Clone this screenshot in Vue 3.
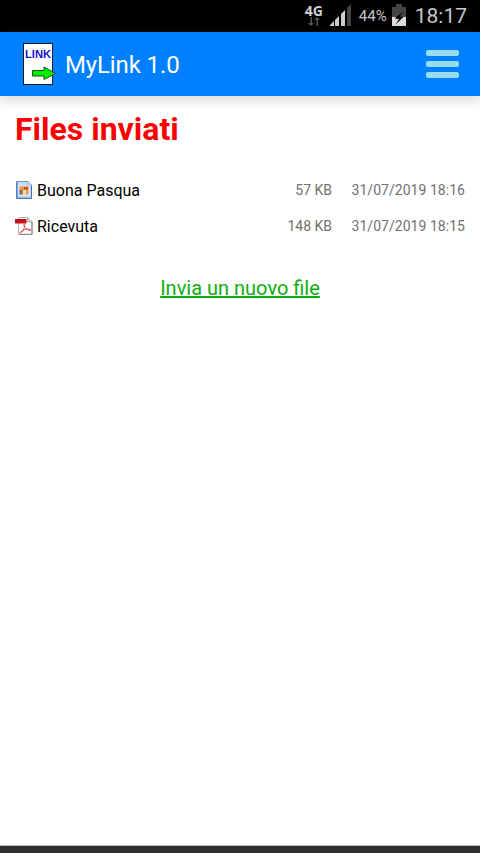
<script setup>
const files = [
  { name: 'Buona Pasqua', type: 'image', size: '57 KB', date: '31/07/2019 18:16' },
  { name: 'Ricevuta', type: 'pdf', size: '148 KB', date: '31/07/2019 18:15' },
]
</script>

<template>
  <div class="screen">
    <div class="status">
      <div class="network">
        <span class="net-label">4G</span>
        <svg width="12" height="10" viewBox="0 0 12 10" fill="#555">
          <path d="M2.500 0h1.500v6h2L3 9 0 6h2.500zM8.500 9V3H6L9 0l3 3h-2v6z" />
        </svg>
      </div>
      <svg class="signal" width="22" height="22" viewBox="0 0 22 22">
        <path d="M0 22v-1l4-4v5z" fill="#d0d0d0" />
        <path d="M5 22v-6l4-4v10zM11 22V10l4-4v16z" fill="#d0d0d0" />
        <path d="M17 22V4l4-4v22z" fill="#444" />
      </svg>
      <span class="percent">44%</span>
      <svg class="battery" width="14" height="22" viewBox="0 0 14 22">
        <path d="M4 0h6v3h4v19H0V3h4z" fill="#444" />
        <path d="M0 13h14v9H0z" fill="#ddd" />
        <path d="M12 7L2.500 14.500l4.500.5-3.500 5.500 8-7.500-4-.5z" fill="#000" />
      </svg>
      <span class="clock">18:17</span>
    </div>

    <header class="bar">
      <svg class="logo" width="34" height="42" viewBox="0 0 34 42">
        <rect x=".5" y=".5" width="29" height="41" fill="#fff" stroke="#123" />
        <text x="2" y="15" class="logo-text" textLength="26" lengthAdjust="spacingAndGlyphs">LINK</text>
        <path d="M9.500 27.500H21V24L32.500 30.500 21 36.500V33H9.500z" fill="#00f000" stroke="#145014" />
      </svg>
      <span class="app-name">MyLink 1.0</span>
      <div class="menu"><i></i><i></i><i></i></div>
    </header>

    <main class="content">
      <h1>Files inviati</h1>
      <div v-for="file in files" :key="file.name" class="row">
        <svg v-if="file.type === 'image'" class="icon" width="18" height="18" viewBox="0 0 18 18">
          <path d="M1.500.5h11l4 3.500v13.500h-15z" fill="#c4d9f5" stroke="#6a93ce" />
          <path d="M2 1v16" stroke="#3c71bf" />
          <path d="M1.500 17.200h15V5" fill="none" stroke="#3f70b7" />
          <path d="M12.500.5V4h4z" fill="#f5f9ff" stroke="#7b9dcc" stroke-width=".7" />
          <rect x="3.500" y="4.500" width="11" height="10" fill="#eef5fc" />
          <rect x="4.500" y="5.500" width="9" height="8" fill="#e69040" />
          <path d="M4.500 5.500h9v2h-9z" fill="#e8a04c" />
          <path d="M9 6h4v2.500H9z" fill="#c8521c" />
          <path d="M4.500 9h3v4.500h-3z" fill="#66798a" />
          <path d="M8 9h3v4.500H8z" fill="#f9dca8" />
        </svg>
        <svg v-else class="icon" width="18" height="18" viewBox="0 0 18 18">
          <path d="M3.500.5h9L17 5v12.500H3.500z" fill="#fff" stroke="#b5b5b5" />
          <path d="M4 17.300h13V5" fill="none" stroke="#808080" />
          <path d="M12.500.5V5H17z" fill="#ddd" stroke="#999" stroke-width=".7" />
          <path d="M0 2h11.500v4.500H0z" fill="#c60c16" />
          <path d="M9 7c-.8 2 2 6 6 6.500 1.500 0 1-1.500-1-1.500-3 0-6 1-8.500 3-1.500 1.500.5 1.500 2-.8C9.500 11 10.500 7.500 9 7z" fill="none" stroke="#e04b50" />
        </svg>
        <span class="name">{{ file.name }}</span>
        <span class="size">{{ file.size }}</span>
        <span class="date">{{ file.date }}</span>
      </div>
      <div class="send"><a>Invia un nuovo file</a></div>
    </main>
    <div class="bottom"></div>
  </div>
</template>

<style>
body {
  background: #fff;
}
</style>

<style scoped>
.screen {
  width: 480px;
  height: 853px;
  display: flex;
  flex-direction: column;
  overflow: hidden;
  background: #fff;
  font-family: Roboto, sans-serif;
}
.status {
  height: 32px;
  flex: none;
  box-sizing: border-box;
  display: flex;
  align-items: flex-start;
  justify-content: flex-end;
  padding: 4px 13px 0 0;
  background: #000;
  color: #c8c8c8;
}
.network {
  width: 20px;
  display: flex;
  flex-direction: column;
  align-items: center;
  margin-right: 6px;
}
.net-label {
  font: 700 14px/13px "Noto Sans", sans-serif;
  color: #d0d0d0;
}
.signal {
  margin-right: 7px;
}
.percent {
  font-size: 15px;
  line-height: 25px;
  margin-right: 5px;
}
.battery {
  margin-right: 9px;
}
.clock {
  font-size: 21px;
  line-height: 25px;
}
.bar {
  height: 64px;
  flex: none;
  box-sizing: border-box;
  display: flex;
  align-items: center;
  padding: 0 21px 0 23px;
  background: #007fff;
  color: #fff;
  box-shadow: 0 2px 14px rgba(60, 40, 30, 0.24);
}
.logo-text {
  font: 700 11px "Liberation Sans", sans-serif;
  fill: #1515d0;
}
.app-name {
  margin-left: 8px;
  padding-top: 2px;
  font-size: 24px;
  line-height: 30px;
  letter-spacing: -0.12px;
}
.menu {
  margin-left: auto;
  width: 33px;
  display: flex;
  flex-direction: column;
  gap: 5px;
}
.menu i {
  height: 6px;
  border-radius: 2px;
  background: #98dcf0;
}
.content {
  flex: 1;
  padding: 13px 15px 0;
}
h1 {
  margin: 0 0 23px;
  font-size: 32px;
  line-height: 40px;
  color: #f80202;
}
.row {
  height: 36px;
  display: flex;
  align-items: center;
}
.name {
  margin-left: 4px;
  flex: 1;
  font-size: 16px;
  color: #000;
}
.size,
.date {
  padding-bottom: 1px;
  font-size: 14px;
  color: #717171;
}
.date {
  width: 133px;
  text-align: right;
  letter-spacing: 0.04px;
}
.send {
  margin-top: 32px;
  text-align: center;
  font-size: 20px;
  line-height: 24px;
}
.send a {
  color: #0eae0e;
  text-decoration: underline;
}
.bottom {
  height: 7px;
  flex: none;
  border-top: 1px solid #b8bebc;
  background: #303030;
}
</style>
